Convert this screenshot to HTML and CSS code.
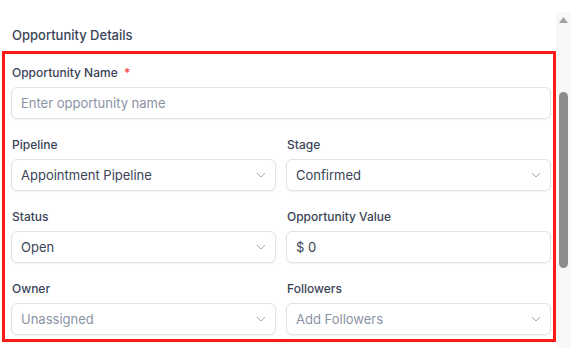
FILE: index.html
```html
<!DOCTYPE html>
<html lang="en">
<head>
    <meta charset="UTF-8">
    <title>Opportunity Details</title>
    <link rel="stylesheet" href="styles.css">
</head>
<body>
    <div class="page">
        <div class="main">
            <h2 class="section-title">Opportunity Details</h2>
            <div class="form-box">
                <div class="field">
                    <label>Opportunity Name <span class="req">*</span></label>
                    <div class="input placeholder">Enter opportunity name</div>
                </div>
                <div class="row">
                    <div class="field">
                        <label>Pipeline</label>
                        <div class="input select">Appointment Pipeline
                            <svg class="chev" width="10" height="6" viewBox="0 0 10 6"><path d="M1 1l4 4 4-4" fill="none" stroke="#a3a9b4" stroke-width="1"/></svg>
                        </div>
                    </div>
                    <div class="field">
                        <label>Stage</label>
                        <div class="input select">Confirmed
                            <svg class="chev" width="10" height="6" viewBox="0 0 10 6"><path d="M1 1l4 4 4-4" fill="none" stroke="#a3a9b4" stroke-width="1"/></svg>
                        </div>
                    </div>
                </div>
                <div class="row">
                    <div class="field">
                        <label>Status</label>
                        <div class="input select">Open
                            <svg class="chev" width="10" height="6" viewBox="0 0 10 6"><path d="M1 1l4 4 4-4" fill="none" stroke="#a3a9b4" stroke-width="1"/></svg>
                        </div>
                    </div>
                    <div class="field">
                        <label>Opportunity Value</label>
                        <div class="input">$ 0</div>
                    </div>
                </div>
                <div class="row">
                    <div class="field">
                        <label>Owner</label>
                        <div class="input select placeholder">Unassigned
                            <svg class="chev" width="10" height="6" viewBox="0 0 10 6"><path d="M1 1l4 4 4-4" fill="none" stroke="#a3a9b4" stroke-width="1"/></svg>
                        </div>
                    </div>
                    <div class="field">
                        <label>Followers</label>
                        <div class="input select placeholder">Add Followers
                            <svg class="chev" width="10" height="6" viewBox="0 0 10 6"><path d="M1 1l4 4 4-4" fill="none" stroke="#a3a9b4" stroke-width="1"/></svg>
                        </div>
                    </div>
                </div>
            </div>
        </div>
        <div class="scrollbar">
            <svg class="arrow" width="9" height="6" viewBox="0 0 9 6"><path d="M4.5 0L9 6H0z" fill="#a3a3a3"/></svg>
            <div class="thumb"></div>
        </div>
    </div>
</body>
</html>
```

FILE: styles.css
```css
body {
    margin: 0;
    background-color: #ffffff;
    font-family: 'Inter', 'Noto Sans', sans-serif;
    color: #344054;
}
.page {
    display: flex;
    height: 348px;
    overflow: hidden;
}
.main {
    flex: 1;
    padding: 25px 0 0 2px;
}
.section-title {
    margin: 0 0 6px 10px;
    font-size: 13px;
    font-weight: 450;
    line-height: 20px;
    color: #3a4456;
}
.form-box {
    border: 3px solid #ff1a1a;
    padding: 11px 2px 4px 6px;
    display: flex;
    flex-direction: column;
    gap: 18px;
}
.row {
    display: flex;
    gap: 10px;
}
.row .field {
    flex: 1;
}
.field label {
    display: block;
    font-size: 12px;
    font-weight: 450;
    line-height: 16px;
    margin: 0 0 6px 1px;
    color: #3a4456;
}
.req {
    color: #f04438;
    margin-left: 3px;
}
.input {
    height: 30px;
    border: 1px solid #dfe2e7;
    border-radius: 6px;
    box-shadow: 0 1px 2px rgba(16, 24, 40, 0.06);
    padding: 0 10px 0 9px;
    display: flex;
    align-items: center;
    justify-content: space-between;
    font-size: 13px;
    color: #3a4456;
}
.input.placeholder {
    color: #8a93a3;
}
.chev {
    margin-right: -1px;
}
.scrollbar {
    width: 15px;
    margin-top: 12px;
    background-color: #f7f7f7;
    display: flex;
    flex-direction: column;
    align-items: center;
}
.arrow {
    margin-top: 5px;
}
.thumb {
    margin-top: 69px;
    width: 9px;
    height: 176px;
    border-radius: 5px;
    background-color: #8c8c8c;
}
```
